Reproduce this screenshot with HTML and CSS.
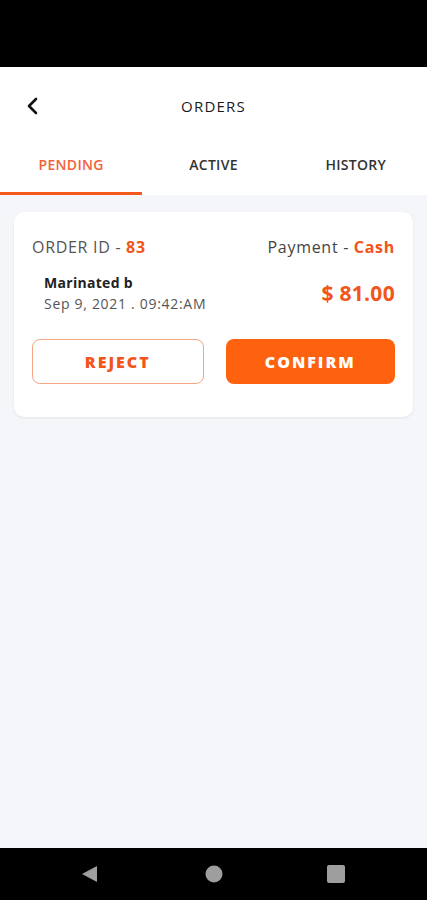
FILE: index.html
```html
<!DOCTYPE html>
<html lang="en">
<head>
    <meta charset="UTF-8">
    <meta name="viewport" content="width=device-width, initial-scale=1.0">
    <title>Orders</title>
    <link rel="stylesheet" href="styles.css">
</head>
<body>
    <div class="status-bar"></div>

    <header class="top-bar">
        <div class="title-row">
            <button class="back-btn" aria-label="Back">
                <svg width="16" height="20" viewBox="0 0 16 20"><path d="M11 3 L4 10 L11 17" fill="none" stroke="#111" stroke-width="2.6" stroke-linecap="round" stroke-linejoin="round"/></svg>
            </button>
            <h1 class="page-title">ORDERS</h1>
        </div>
        <nav class="tabs">
            <div class="tab active">PENDING</div>
            <div class="tab">ACTIVE</div>
            <div class="tab">HISTORY</div>
        </nav>
    </header>

    <main class="content">
        <div class="order-card">
            <div class="card-row">
                <div class="order-id">ORDER ID - <span class="accent">83</span></div>
                <div class="payment">Payment - <span class="accent">Cash</span></div>
            </div>
            <div class="card-row item-row">
                <div class="item">
                    <div class="item-name">Marinated b</div>
                    <div class="item-date">Sep 9, 2021 . 09:42:AM</div>
                </div>
                <div class="price">$ 81.00</div>
            </div>
            <div class="actions">
                <button class="btn btn-reject">REJECT</button>
                <button class="btn btn-confirm">CONFIRM</button>
            </div>
        </div>
    </main>

    <footer class="nav-bar">
        <svg width="20" height="20" viewBox="0 0 20 20"><path d="M2 10 L17 2 L17 18 Z" fill="#9e9e9e"/></svg>
        <svg width="18" height="18" viewBox="0 0 18 18"><circle cx="9" cy="9" r="8.5" fill="#9e9e9e"/></svg>
        <svg width="18" height="18" viewBox="0 0 18 18"><rect x="0" y="0" width="18" height="18" rx="2" fill="#9e9e9e"/></svg>
    </footer>
</body>
</html>
```

FILE: styles.css
```css
body, html {
    margin: 0;
    padding: 0;
    height: 100%;
    font-family: 'Open Sans', 'Noto Sans', sans-serif;
    background-color: #f4f6f9;
    color: #222;
}
body {
    display: flex;
    flex-direction: column;
    height: 900px;
    overflow: hidden;
}
.status-bar {
    height: 67px;
    background-color: #000;
    flex-shrink: 0;
}
.top-bar {
    background-color: #fff;
    flex-shrink: 0;
}
.title-row {
    height: 78px;
    display: flex;
    align-items: center;
    justify-content: center;
    position: relative;
}
.back-btn {
    position: absolute;
    left: 23px;
    top: 29px;
    border: none;
    background: none;
    padding: 0;
    width: 20px;
    height: 22px;
}
.page-title {
    margin: 0;
    font-size: 15px;
    font-weight: 500;
    letter-spacing: 1.2px;
    color: #1a1a1a;
}
.tabs {
    display: flex;
    height: 50px;
}
.tab {
    flex: 1;
    display: flex;
    align-items: center;
    justify-content: center;
    font-size: 14px;
    font-weight: 600;
    letter-spacing: 0.3px;
    color: #333;
    border-bottom: 3px solid transparent;
    box-sizing: border-box;
    padding-bottom: 8px;
}
.tab.active {
    color: #f4623a;
    border-bottom-color: #f55a1c;
}
.content {
    flex: 1;
    padding: 17px 14px;
}
.order-card {
    background-color: #fff;
    border-radius: 10px;
    box-shadow: 0 1px 3px rgba(0, 0, 0, 0.08);
    padding: 24px 18px 33px 18px;
}
.card-row {
    display: flex;
    justify-content: space-between;
    align-items: center;
}
.order-id, .payment {
    font-size: 16px;
    letter-spacing: 0.7px;
    color: #555;
}
.payment {
    color: #444;
}
.accent {
    color: #f2541b;
    font-weight: 700;
}
.item-row {
    margin-top: 15px;
}
.item {
    padding-left: 12px;
}
.item-name {
    font-size: 14px;
    font-weight: 700;
    letter-spacing: 0.3px;
    color: #222;
}
.item-date {
    font-size: 14px;
    letter-spacing: 0.7px;
    color: #555;
    margin-top: 2px;
}
.price {
    font-size: 21px;
    font-weight: 700;
    color: #f2541b;
    letter-spacing: 0.3px;
}
.actions {
    display: flex;
    gap: 22px;
    margin-top: 26px;
}
.btn {
    flex: 1;
    height: 45px;
    border-radius: 8px;
    font-family: inherit;
    font-size: 16px;
    font-weight: 800;
    letter-spacing: 2px;
    cursor: pointer;
}
.btn-reject {
    background-color: #fff;
    border: 1px solid #f4a584;
    color: #f2541b;
}
.btn-confirm {
    background-color: #ff620f;
    border: none;
    color: #fff;
}
.nav-bar {
    height: 52px;
    background-color: #000;
    flex-shrink: 0;
    display: flex;
    justify-content: space-between;
    align-items: center;
    padding: 0 82px 0 80px;
}
```
